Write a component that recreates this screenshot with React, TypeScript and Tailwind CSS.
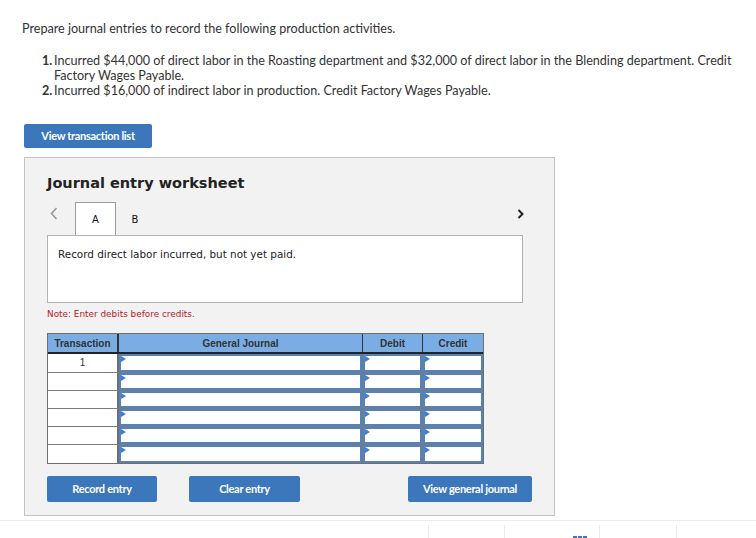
import React from "react";

function Tri() {
  return (
    <span className="absolute left-[0px] top-[0px] w-0 h-0 border-t-[3px] border-b-[3px] border-l-[5px] border-t-transparent border-b-transparent border-l-[#3f7fd0]" />
  );
}

function InputCell({ w }: { w: string }) {
  return (
    <div className={`${w} h-full border-r border-[#7a7a7a] relative`}>
      <div className="relative h-full bg-white border-2 border-[#5682bb]">
        <Tri />
      </div>
    </div>
  );
}

function Row({ n, last }: { n?: string; last?: boolean }) {
  return (
    <div className={`flex h-[18.2px] ${last ? "" : "border-b border-[#7a7a7a]"}`}>
      <div className="w-[71px] h-full bg-white border-r-2 border-[#6f6f6f] flex items-center justify-center text-[10px] text-[#333] font-['Liberation_Sans',Arial,sans-serif]">
        {n}
      </div>
      <InputCell w="w-[244px]" />
      <InputCell w="w-[60px]" />
      <div className="w-[60px] h-full relative">
        <div className="relative h-full bg-white border-2 border-[#5682bb]">
          <Tri />
        </div>
      </div>
    </div>
  );
}

export default function App() {
  const lato = "font-['Lato','Open_Sans',sans-serif]";
  const btn =
    "bg-[#3b77ba] text-white font-bold text-[11px] tracking-[-0.3px] rounded-[2px] flex items-center justify-center font-['Lato',sans-serif]";
  return (
    <div className="w-[756px] h-[538px] bg-white overflow-hidden relative">
      <div className={`${lato} text-[12.6px] text-[#333] leading-[15px] pl-[22px] pt-[21px]`}>
        <p>Prepare journal entries to record the following production activities.</p>
        <ol className="mt-[17px] pl-[20px] pr-[8px]">
          <li className="flex">
            <span className="w-[12px] font-bold shrink-0">1.</span>
            <span>
              Incurred $44,000 of direct labor in the Roasting department and $32,000 of direct labor in the Blending department. Credit Factory Wages Payable.
            </span>
          </li>
          <li className="flex">
            <span className="w-[12px] font-bold shrink-0">2.</span>
            <span>Incurred $16,000 of indirect labor in production. Credit Factory Wages Payable.</span>
          </li>
        </ol>
      </div>

      <div className="pl-[24px] mt-[26px]">
        <button className={`${btn} w-[128px] h-[24px]`}>View transaction list</button>
      </div>

      <div className="ml-[24px] mt-[9px] w-[531px] h-[359px] bg-[#f2f2f2] border border-[#c4c4c4] px-[22px]">
        <div className="mt-[16px] text-[14.5px] font-bold text-[#222] font-['DejaVu_Sans',Verdana,sans-serif] leading-[18px]">
          Journal entry worksheet
        </div>
        <div className="mt-[11px] flex items-end h-[32px] relative">
          <svg className="absolute left-[3px] top-[4px]" width="8" height="13" viewBox="0 0 8 13">
            <path d="M6.5 1 L1.5 6.5 L6.5 12" fill="none" stroke="#9a9a9a" strokeWidth="1.6" />
          </svg>
          <div className="ml-[28px] w-[41px] h-[33px] bg-white border border-b-0 border-[#9a9a9a] flex items-center justify-center text-[10px] text-[#111] font-['DejaVu_Sans',sans-serif] relative z-10">
            A
          </div>
          <div className="w-[38px] h-[32px] flex items-center justify-center text-[10px] text-[#111] font-['DejaVu_Sans',sans-serif]">
            B
          </div>
          <svg className="absolute right-[8px] top-[6px]" width="7" height="10" viewBox="0 0 7 10">
            <path d="M1.5 1 L5.5 5 L1.5 9" fill="none" stroke="#222" strokeWidth="2" />
          </svg>
        </div>
        <div className="w-[476px] h-[68px] bg-white border border-[#b3b3b3] pl-[10px] pt-[11px] text-[10.4px] text-[#222] font-['DejaVu_Sans',Verdana,sans-serif]">
          Record direct labor incurred, but not yet paid.
        </div>
        <div className="mt-[5px] text-[8.9px] text-[#b3202a] font-['DejaVu_Sans',Verdana,sans-serif]">
          Note: Enter debits before credits.
        </div>

        <div className="mt-[12px] w-[437px] border border-[#6f6f6f]">
          <div className="flex h-[20px] bg-[#79ade4] border-b-2 border-[#222] text-[10px] font-bold text-[#333] font-['Liberation_Sans',Arial,sans-serif]">
            <div className="w-[71px] border-r-2 border-[#333] flex items-center justify-center">Transaction</div>
            <div className="w-[244px] border-r border-[#333] flex items-center justify-center">General Journal</div>
            <div className="w-[60px] border-r border-[#333] flex items-center justify-center">Debit</div>
            <div className="w-[60px] flex items-center justify-center">Credit</div>
          </div>
          <Row n="1" />
          <Row />
          <Row />
          <Row />
          <Row />
          <Row last />
        </div>

        <div className="mt-[12px] flex items-center">
          <button className={`${btn} w-[110px] h-[26px]`}>Record entry</button>
          <button className={`${btn} ml-[32px] w-[111px] h-[26px]`}>Clear entry</button>
          <button className={`${btn} ml-[108px] w-[124px] h-[26px]`}>View general journal</button>
        </div>
      </div>

      <div className="mt-[4px] h-[1px] bg-[#ececec] w-full" />
      <div className="flex h-[20px] pt-[4px]">
        <div className="w-[428px]" />
        <div className="w-[76px] border-l border-[#ececec]" />
        <div className="w-[95px] border-l border-[#ececec] relative">
          <div className="absolute left-[68px] top-[11px] flex gap-[1px]">
            <span className="w-[4px] h-[3px] bg-[#3b77ba]" />
            <span className="w-[4px] h-[3px] bg-[#3b77ba]" />
            <span className="w-[4px] h-[3px] bg-[#3b77ba]" />
          </div>
        </div>
        <div className="w-[77px] border-l border-[#ececec]" />
        <div className="flex-1 border-l border-[#ececec]" />
      </div>
    </div>
  );
}
